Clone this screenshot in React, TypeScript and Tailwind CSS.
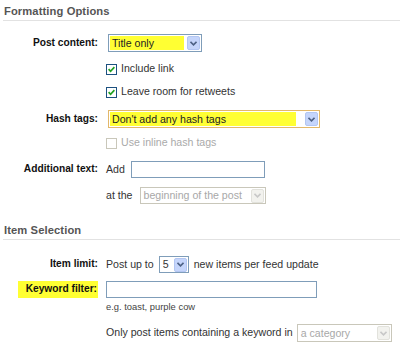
import React from "react";

const FONT = "font-['Liberation_Sans',Arial,sans-serif]";

function Chevron({ disabled }: { disabled?: boolean }) {
  return (
    <svg width="7" height="5" viewBox="0 0 7 5">
      <path
        d="M0.5 0.8 L3.5 3.8 L6.5 0.8"
        fill="none"
        stroke={disabled ? "#c8c8c8" : "#4d6185"}
        strokeWidth="1.6"
      />
    </svg>
  );
}

function DropBtn({ disabled }: { disabled?: boolean }) {
  return (
    <div
      className={
        "w-[13px] h-[14px] mr-[1px] rounded-[2px] flex items-center justify-center border " +
        (disabled
          ? "bg-[#f2f2ee] border-[#e2e2dc]"
          : "bg-[#c5d5fb] border-[#b3c6f2]")
      }
    >
      <Chevron disabled={disabled} />
    </div>
  );
}

function Select({
  width,
  height = 18,
  text,
  hl,
  disabled,
  focus,
}: {
  width: string;
  height?: number;
  text: string;
  hl?: string;
  disabled?: boolean;
  focus?: boolean;
}) {
  return (
    <div
      className={
        width +
        " flex items-center justify-between bg-white border " +
        (height === 18 ? "h-[18px] " : "h-[17px] ") +
        (disabled
          ? "border-[#c9c7ba]"
          : focus
          ? "border-[#e3b86a]"
          : "border-[#7f9db9]")
      }
    >
      <div className="flex-1 h-full pl-[1px] py-[1px] flex">
        <span
          className={
            "h-full flex items-center pl-[2px] leading-none " +
            (hl ? hl + " bg-[#ffff33] text-[#222]" : disabled ? "text-[#a8a8a8]" : "text-[#333]")
          }
        >
          {text}
        </span>
      </div>
      <DropBtn disabled={disabled} />
    </div>
  );
}

function Checkbox({ disabled }: { disabled?: boolean }) {
  return (
    <div
      className={
        "w-[11px] h-[11px] border flex items-center justify-center bg-white " +
        (disabled ? "border-[#c9c7ba]" : "border-[#1c5180]")
      }
    >
      {!disabled && (
        <svg width="7" height="7" viewBox="0 0 7 7">
          <path d="M0.6 3.2 L2.6 5.3 L6.4 1.2" fill="none" stroke="#21a121" strokeWidth="1.7" />
        </svg>
      )}
    </div>
  );
}

function Row({
  label,
  mt,
  h,
  children,
  labelHl,
}: {
  label?: string;
  mt: string;
  h: string;
  children?: React.ReactNode;
  labelHl?: boolean;
}) {
  return (
    <div className={"flex items-center " + mt + " " + h}>
      <div className="w-[98px] shrink-0 flex justify-end">
        {label && (
          <span
            className={
              "font-bold text-[10.2px] text-[#111] leading-none " +
              (labelHl ? "bg-[#ffff33] w-[80px] h-[17px] flex items-center justify-end pr-[1px]" : "")
            }
          >
            {label}
          </span>
        )}
      </div>
      <div className="ml-[8px] flex items-center text-[10.6px] text-[#333]">{children}</div>
    </div>
  );
}

function Header({ text, mt }: { text: string; mt: string }) {
  return (
    <div
      className={
        "ml-[3px] h-[21px] border-b border-[#e2e2e2] flex items-end pb-[3px] pl-[1px] " + mt
      }
    >
      <span className="font-bold text-[11.2px] text-[#555] tracking-[0.1px] leading-none">
        {text}
      </span>
    </div>
  );
}

export default function App() {
  return (
    <div className={"w-[400px] h-[352px] bg-white overflow-hidden " + FONT}>
      <Header text="Formatting Options" mt="mt-0" />

      <Row label="Post content:" mt="mt-[13px]" h="h-[18px]">
        <div className="ml-[2px]">
          <Select width="w-[94px]" text="Title only" hl="w-[74px]" />
        </div>
      </Row>

      <Row mt="mt-[10px]" h="h-[14px]">
        <Checkbox />
        <span className="ml-[4px]">Include link</span>
      </Row>

      <Row mt="mt-[9px]" h="h-[14px]">
        <Checkbox />
        <span className="ml-[4px]">Leave room for retweets</span>
      </Row>

      <Row label="Hash tags:" mt="mt-[11px]" h="h-[18px]">
        <div className="ml-[2px]">
          <Select width="w-[212px]" text="Don't add any hash tags" hl="w-[186px]" focus />
        </div>
      </Row>

      <Row mt="mt-[8px]" h="h-[14px]">
        <Checkbox disabled />
        <span className="ml-[4px] text-[#aaa]">Use inline hash tags</span>
      </Row>

      <Row label="Additional text:" mt="mt-[11px]" h="h-[17px]">
        <span>Add</span>
        <div className="ml-[6px] w-[134px] h-[17px] border border-[#7f9db9] bg-white" />
      </Row>

      <Row mt="mt-[9px]" h="h-[17px]">
        <span>at the</span>
        <div className="ml-[7px]">
          <Select width="w-[126px]" height={17} text="beginning of the post" disabled />
        </div>
      </Row>

      <Header text="Item Selection" mt="mt-[15px]" />

      <Row label="Item limit:" mt="mt-[16px]" h="h-[17px]">
        <span>Post up to</span>
        <div className="ml-[5px]">
          <Select width="w-[30px]" height={17} text="5" />
        </div>
        <span className="ml-[5px]">new items per feed update</span>
      </Row>

      <Row label="Keyword filter:" mt="mt-[8px]" h="h-[17px]" labelHl>
        <div className="w-[211px] h-[17px] border border-[#7f9db9] bg-white" />
      </Row>

      <Row mt="mt-[3px]" h="h-[12px]">
        <span className="text-[9.4px] text-[#444]">e.g. toast, purple cow</span>
      </Row>

      <Row mt="mt-[11px]" h="h-[18px]">
        <span>Only post items containing a keyword in</span>
        <div className="ml-[4px]">
          <Select width="w-[95px]" text="a category" disabled />
        </div>
      </Row>
    </div>
  );
}
